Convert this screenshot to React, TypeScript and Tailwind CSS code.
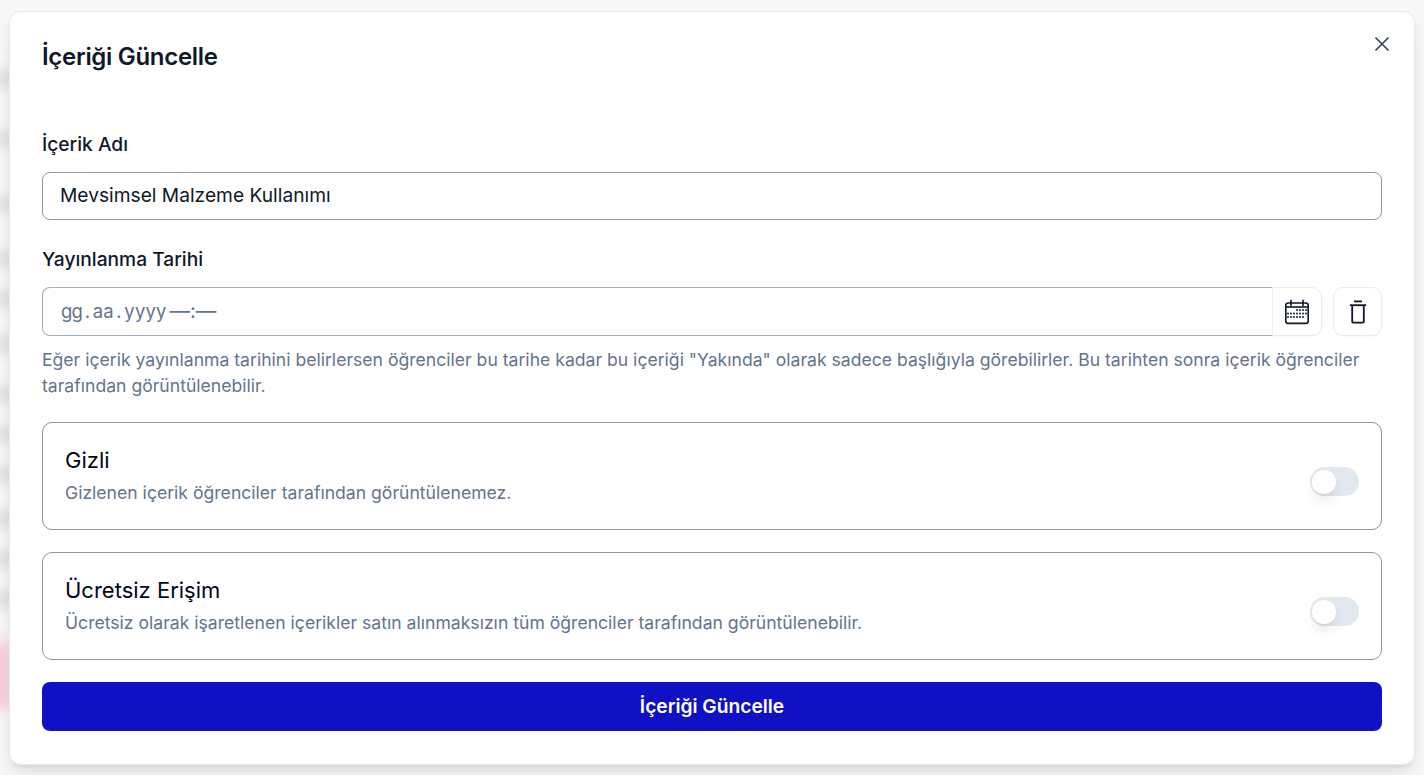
import React from "react";

function CalendarIcon() {
  const dots: [number, number][] = [
    [13, 11], [16, 11], [19, 11], [22, 11],
    [4, 14.5], [7, 14.5], [10, 14.5], [13, 14.5], [16, 14.5], [19, 14.5], [22, 14.5],
    [4, 18], [7, 18], [10, 18], [13, 18], [16, 18], [19, 18],
  ];
  return (
    <svg width="26" height="26" viewBox="0 0 26 26" fill="none" stroke="#0f172a" strokeWidth="1.6">
      <rect x="1.8" y="4" width="22.4" height="20.4" rx="2.4" />
      <path d="M7 1.2V6.5M19 1.2V6.5" strokeLinecap="round" />
      <path d="M2 8H24" />
      {dots.map(([x, y]) => (
        <rect key={`${x}-${y}`} x={x - 0.9} y={y - 0.8} width="1.8" height="1.6" fill="#0f172a" stroke="none" />
      ))}
    </svg>
  );
}

function TrashIcon() {
  return (
    <svg width="18" height="24" viewBox="0 0 18 24" fill="none" stroke="#0f172a" strokeWidth="1.8">
      <path d="M5 1.4H13" />
      <path d="M0.8 5.2H17.2" />
      <path d="M3.2 5.2V21.8C3.2 22.3 3.5 22.6 4 22.6H14C14.5 22.6 14.8 22.3 14.8 21.8V5.2" />
    </svg>
  );
}

function ToggleCard({ title, text }: { title: string; text: string }) {
  return (
    <div className="flex h-[108px] items-start justify-between rounded-[10px] border border-[#8a96aa] px-[22px] pt-[21px]">
      <div className="flex flex-col">
        <div className="text-[22px] leading-[32px] text-[#020617]">{title}</div>
        <div className="mt-[4px] text-[17.6px] leading-[26px] text-[#64748b]">{text}</div>
      </div>
      <div className="mt-[23px] flex h-[29px] w-[49px] items-center rounded-full bg-[#e2e8f0] pl-[2px]">
        <div className="h-[24px] w-[24px] rounded-full bg-white shadow-[0_10px_15px_-3px_rgba(0,0,0,0.1),0_4px_6px_-4px_rgba(0,0,0,0.1)]" />
      </div>
    </div>
  );
}

const bands = [
  "top-[70px]", "top-[130px]", "top-[195px]", "top-[250px]", "top-[290px]", "top-[335px]",
  "top-[385px]", "top-[425px]", "top-[465px]", "top-[510px]", "top-[550px]", "top-[590px]",
];

export default function App() {
  return (
    <div className="relative h-[775px] w-[1424px] overflow-hidden bg-[#f7f7f8] font-['Inter',sans-serif]">
      {bands.map((b) => (
        <div key={b} className={`absolute left-[-6px] h-[18px] w-[20px] bg-[#e0e0e2] blur-[6px] ${b}`} />
      ))}
      <div className="absolute left-[-14px] top-[640px] h-[70px] w-[26px] rounded-full bg-[#f5c6d6] blur-[8px]" />
      <div className="relative ml-[9px] mt-[11px] flex h-[754px] w-[1406px] flex-col rounded-[12px] border border-[#e6ebf2] bg-white px-8 pt-[29px] shadow-[0_10px_15px_-3px_rgba(0,0,0,0.1),0_4px_6px_-4px_rgba(0,0,0,0.1)]">
        <h2 className="text-2xl leading-8 font-semibold tracking-[-0.3px] text-[#0f172a]">İçeriği Güncelle</h2>
        <button className="absolute right-[24px] top-[24px] text-[#334155]">
          <svg width="16" height="16" viewBox="0 0 16 16" fill="none" stroke="currentColor" strokeWidth="1.6">
            <path d="M1.5 1.5L14.5 14.5M14.5 1.5L1.5 14.5" />
          </svg>
        </button>

        <label className="mt-[57px] block text-[19.2px] leading-7 font-medium text-[#0f172a]">İçerik Adı</label>
        <div className="mt-[14px] flex h-[48px] items-center rounded-[8px] border border-[#8a96aa] px-[17px] pb-[1px] text-[19.2px] text-[#0f172a]">
          Mevsimsel Malzeme Kullanımı
        </div>

        <label className="mt-[25px] block text-[19.2px] leading-7 font-medium text-[#0f172a]">Yayınlanma Tarihi</label>
        <div className="mt-[14px] flex h-[49px] items-stretch">
          <div className="flex flex-1 items-center rounded-l-[8px] border border-r-0 border-[#a3adbd] pl-[18px] text-[20.5px] text-[#64748b]">
            <span className="flex text-[18.5px]">
              {"gg.aa.yyyy".split("").map((c, i) => (
                <span key={i} className="w-[10.56px] text-center">{c}</span>
              ))}
            </span>
            <span className="ml-[3px]">—:—</span>
          </div>
          <button className="flex w-[50px] items-center justify-center rounded-r-[10px] border border-[#e8edf5] bg-white shadow-[0_1px_2px_0_rgba(0,0,0,0.03)]">
            <CalendarIcon />
          </button>
          <button className="ml-[11px] flex w-[49px] items-center justify-center rounded-[10px] border border-[#e8edf5] bg-white shadow-[0_1px_2px_0_rgba(0,0,0,0.03)]">
            <TrashIcon />
          </button>
        </div>
        <p className="mt-[11px] text-[17.6px] leading-[26px] text-[#64748b]">
          Eğer içerik yayınlanma tarihini belirlersen öğrenciler bu tarihe kadar bu içeriği "Yakında" olarak sadece başlığıyla görebilirler. Bu tarihten sonra içerik öğrenciler tarafından görüntülenebilir.
        </p>

        <div className="mt-[23px] flex flex-col gap-[22px]">
          <ToggleCard title="Gizli" text="Gizlenen içerik öğrenciler tarafından görüntülenemez." />
          <ToggleCard title="Ücretsiz Erişim" text="Ücretsiz olarak işaretlenen içerikler satın alınmaksızın tüm öğrenciler tarafından görüntülenebilir." />
        </div>

        <button className="mt-[22px] flex h-[49px] items-center justify-center rounded-[8px] bg-[#1010c5] text-[19.2px] font-semibold text-white">
          İçeriği Güncelle
        </button>
      </div>
    </div>
  );
}
